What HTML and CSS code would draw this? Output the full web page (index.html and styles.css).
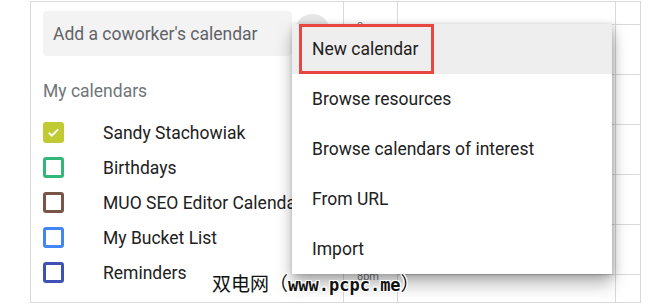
FILE: index.html
```html
<!DOCTYPE html>
<html>
<head>
<meta charset="utf-8">
<link rel="stylesheet" href="styles.css">
</head>
<body>
<div class="frame">
  <aside class="sidebar">
    <div class="search-row">
      <div class="search">Add a coworker's calendar</div>
      <div class="add-btn"></div>
    </div>
    <div class="heading">My calendars</div>
    <ul class="cal-list">
      <li class="cal"><span class="box filled" style="--c:#c0ca33"><svg viewBox="0 0 16 16" width="15" height="15"><path d="M3 8.3l3.2 3.2L13 4.7" fill="none" stroke="#fff" stroke-width="2"/></svg></span><span class="name">Sandy Stachowiak</span></li>
      <li class="cal"><span class="box" style="--c:#33b679"></span><span class="name">Birthdays</span></li>
      <li class="cal"><span class="box" style="--c:#795548"></span><span class="name">MUO SEO Editor Calendar</span></li>
      <li class="cal"><span class="box" style="--c:#4285f4"></span><span class="name">My Bucket List</span></li>
      <li class="cal"><span class="box" style="--c:#3f51b5"></span><span class="name">Reminders</span></li>
    </ul>
  </aside>
  <div class="gutter">
    <span class="tlabel">3pm</span>
    <span class="tlabel">4pm</span>
    <span class="tlabel">5pm</span>
    <span class="tlabel">6pm</span>
    <span class="tlabel">7pm</span>
    <span class="tlabel">8pm</span>
  </div>
  <div class="day"><div class="slot"></div><div class="slot"></div><div class="slot"></div><div class="slot"></div><div class="slot"></div><div class="slot"></div></div>
  <div class="day narrow"><div class="slot"></div><div class="slot"></div><div class="slot"></div><div class="slot"></div><div class="slot"></div><div class="slot"></div></div>
</div>

<div class="menu">
  <div class="item active">New calendar<span class="highlight"></span></div>
  <div class="item">Browse resources</div>
  <div class="item">Browse calendars of interest</div>
  <div class="item">From URL</div>
  <div class="item">Import</div>
</div>

<div class="watermark"><span class="wm-cjk">双电网（</span><span class="wm-latin">www.pcpc.me</span><span class="wm-cjk">）</span></div>
</body>
</html>
```

FILE: styles.css
```css
* { box-sizing: border-box; }
html, body { margin: 0; padding: 0; background: #fff; }
body {
  font-family: Roboto, "Noto Sans", Arial, sans-serif;
  width: 670px;
  height: 305px;
  overflow: hidden;
  position: relative;
}
.frame {
  margin: 1px 0 0 30px;
  width: 611px;
  height: 302px;
  border: 1px solid #d9d9d9;
  display: flex;
  overflow: hidden;
}
.sidebar {
  width: 312px;
  flex: none;
  padding: 9px 0 0 12px;
  display: flex;
  flex-direction: column;
}
.search-row {
  display: flex;
  align-items: flex-start;
  gap: 3px;
}
.search {
  width: 249px;
  height: 45px;
  background: #f3f3f3;
  border-radius: 4px;
  padding-left: 10px;
  display: flex;
  align-items: center;
  font-size: 17.5px;
  color: #5f6368;
}
.add-btn {
  width: 35px;
  height: 35px;
  margin-top: 3px;
  border-radius: 50%;
  background: #e6e6e6;
}
.heading {
  margin-top: 23px;
  height: 24px;
  line-height: 24px;
  font-size: 17.5px;
  color: #70757a;
}
.cal-list {
  list-style: none;
  margin: 12px 0 0;
  padding: 0;
}
.cal {
  height: 35px;
  display: flex;
  align-items: center;
  gap: 39px;
  white-space: nowrap;
}
.box {
  width: 21px;
  height: 21px;
  flex: none;
  border: 3px solid var(--c);
  border-radius: 3px;
  display: flex;
  align-items: center;
  justify-content: center;
}
.box.filled { background: var(--c); }
.name {
  font-size: 17.5px;
  color: #212121;
}
.gutter {
  width: 54px;
  flex: none;
  border-left: 1px solid #d9d9d9;
  display: flex;
  flex-direction: column;
  gap: 38px;
  padding: 19px 0 0 13px;
}
.tlabel {
  height: 12px;
  line-height: 12px;
  font-size: 11px;
  color: #70757a;
}
.day {
  width: 218px;
  flex: none;
  border-left: 1px solid #d9d9d9;
  padding-top: 22px;
}
.day.narrow {
  width: auto;
  flex: 1;
}
.slot {
  height: 50px;
  border-top: 1px solid #d9d9d9;
}
.menu {
  position: absolute;
  left: 292px;
  top: 24px;
  width: 320px;
  height: 250px;
  background: #fff;
  box-shadow: 0 10px 16px rgba(0,0,0,0.28), 2px 2px 8px rgba(0,0,0,0.16), 0 0 4px rgba(0,0,0,0.08);
}
.item {
  position: relative;
  height: 50px;
  display: flex;
  align-items: center;
  padding-left: 20px;
  font-size: 17.5px;
  color: #212121;
}
.item.active { background: #eeeeee; }
.highlight {
  position: absolute;
  left: 7px;
  top: 0;
  width: 135px;
  height: 50px;
  border: 3px solid #e8473f;
}
.watermark {
  position: absolute;
  left: 212px;
  top: 270px;
  font-size: 19px;
  line-height: 26px;
  color: #111;
  white-space: nowrap;
  text-shadow: 1px 0 0 #fff, -1px 0 0 #fff, 0 1px 0 #fff, 0 -1px 0 #fff, 1px 1px 0 #fff, -1px -1px 0 #fff, 1px -1px 0 #fff, -1px 1px 0 #fff;
}
.wm-cjk {
  font-family: "Noto Sans CJK SC", sans-serif;
}
.wm-latin {
  font-family: "DejaVu Sans Mono", monospace;
  font-weight: bold;
  font-size: 17px;
}
```
